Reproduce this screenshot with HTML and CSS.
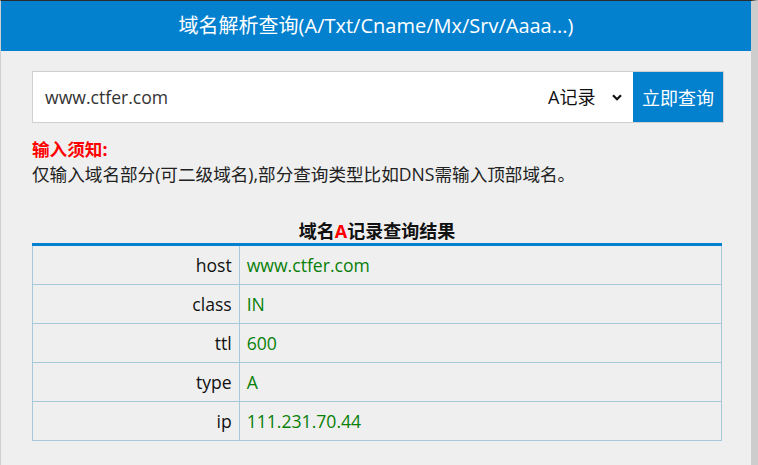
FILE: index.html
```html
<!DOCTYPE html>
<html lang="zh-CN">
<head>
<meta charset="utf-8">
<title>域名解析查询</title>
<link rel="stylesheet" href="styles.css">
</head>
<body>
<div class="page">
  <header class="top">域名解析查询(A/Txt/Cname/Mx/Srv/Aaaa...)</header>
  <main class="content">
    <form class="search">
      <input class="domain" type="text" value="www.ctfer.com">
      <select class="rtype">
        <option>A记录</option>
      </select>
      <svg class="chev" width="10" height="7" viewBox="0 0 10 7"><path d="M1 1.2 L5 5.2 L9 1.2" fill="none" stroke="#111" stroke-width="2.2"/></svg>
      <button class="go" type="button">立即查询</button>
    </form>
    <div class="notice">
      <p class="notice-title">输入须知:</p>
      <p class="notice-text">仅输入域名部分(可二级域名),部分查询类型比如DNS需输入顶部域名。</p>
    </div>
    <h3 class="result-title">域名<span class="red">A</span>记录查询结果</h3>
    <table class="result">
      <tr><th>host</th><td>www.ctfer.com</td></tr>
      <tr><th>class</th><td>IN</td></tr>
      <tr><th>ttl</th><td>600</td></tr>
      <tr><th>type</th><td>A</td></tr>
      <tr><th>ip</th><td>111.231.70.44</td></tr>
    </table>
  </main>
</div>
</body>
</html>
```

FILE: styles.css
```css
html, body {
  margin: 0;
  padding: 0;
}
body {
  background: #cdcdcd;
  font-family: "Open Sans", "Noto Sans CJK SC", sans-serif;
}
.page {
  box-sizing: border-box;
  width: 758px;
  height: 465px;
  border-top: 1px solid #2b2b2b;
  border-left: 1px solid #cfcfcf;
  border-right: 7px solid #cdcdcd;
  background: #efefef;
  overflow: hidden;
}
.top {
  height: 50px;
  line-height: 50px;
  background: #0381cf;
  color: #fff;
  text-align: center;
  font-size: 20px;
}
.content {
  padding: 20px 0 0 31px;
}
.search {
  display: flex;
  align-items: center;
  width: 692px;
  height: 52px;
  box-sizing: border-box;
  border: 1px solid #d0d0d0;
  background: #fff;
  margin: 0;
}
.domain {
  flex: 1;
  min-width: 0;
  border: 0;
  outline: none;
  background: transparent;
  padding: 0 0 0 12px;
  font: 17.6px "Open Sans", "Noto Sans CJK SC", sans-serif;
  color: #333;
  height: 50px;
}
.rtype {
  appearance: none;
  -webkit-appearance: none;
  border: 0;
  background: transparent;
  font: 18px "Open Sans", "Noto Sans CJK SC", sans-serif;
  color: #111;
  padding: 0;
  margin-right: 16px;
  outline: none;
}
.chev {
  display: block;
  margin-right: 11px;
}
.go {
  width: 90px;
  height: 50px;
  border: 0;
  background: #0381cf;
  color: #fff;
  font: 18px "Open Sans", "Noto Sans CJK SC", sans-serif;
  padding: 0;
}
.notice {
  margin-top: 14px;
  font-size: 17.6px;
  line-height: 25px;
}
.notice p {
  margin: 0;
}
.notice-title {
  color: #ff0000;
  font-weight: bold;
}
.notice-text {
  color: #222;
}
.result-title {
  width: 690px;
  margin: 32px 0 0 0;
  text-align: center;
  font-size: 18px;
  line-height: 24px;
  font-weight: bold;
  color: #111;
}
.red {
  color: #ff0000;
}
.result {
  width: 690px;
  border-collapse: collapse;
  border-top: 3px solid #0381cf;
  font-size: 17.6px;
}
.result th,
.result td {
  border: 1px solid #a5c8da;
  height: 38px;
  padding: 0 7px;
  font-weight: normal;
}
.result tr:first-child th,
.result tr:first-child td {
  border-top: 0;
}
.result th {
  width: 30%;
  text-align: right;
  color: #111;
}
.result td {
  text-align: left;
  color: #087f08;
}
```
